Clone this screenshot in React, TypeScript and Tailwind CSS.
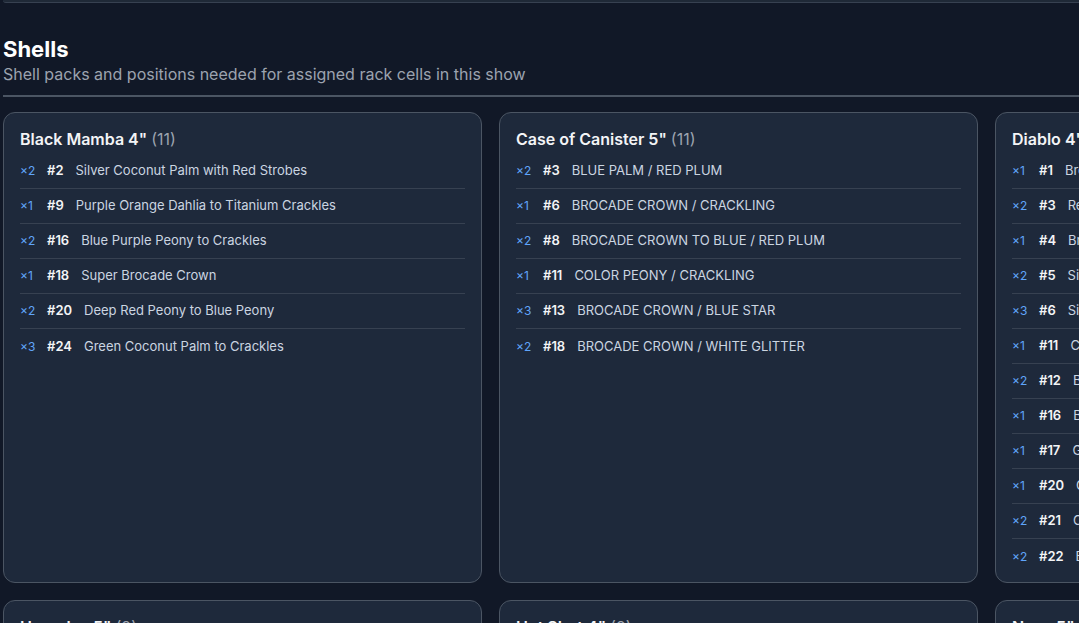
import React from "react";

type Row = [number, number, string];
const cards: { title: string; count: number; rows: Row[] }[] = [
  {
    title: 'Black Mamba 4"',
    count: 11,
    rows: [
      [2, 2, "Silver Coconut Palm with Red Strobes"],
      [1, 9, "Purple Orange Dahlia to Titanium Crackles"],
      [2, 16, "Blue Purple Peony to Crackles"],
      [1, 18, "Super Brocade Crown"],
      [2, 20, "Deep Red Peony to Blue Peony"],
      [3, 24, "Green Coconut Palm to Crackles"],
    ],
  },
  {
    title: 'Case of Canister 5"',
    count: 11,
    rows: [
      [2, 3, "BLUE PALM / RED PLUM"],
      [1, 6, "BROCADE CROWN / CRACKLING"],
      [2, 8, "BROCADE CROWN TO BLUE / RED PLUM"],
      [1, 11, "COLOR PEONY / CRACKLING"],
      [3, 13, "BROCADE CROWN / BLUE STAR"],
      [2, 18, "BROCADE CROWN / WHITE GLITTER"],
    ],
  },
  {
    title: 'Diablo 4"',
    count: 19,
    rows: [
      [1, 1, "Brocade Crown"],
      [2, 3, "Red Peony"],
      [1, 4, "Brocade Willow"],
      [2, 5, "Silver Strobe"],
      [3, 6, "Silver Crossette"],
      [1, 11, "Crackling Chrysanthemum"],
      [2, 12, "Blue Peony"],
      [1, 16, "Brocade Palm"],
      [1, 17, "Green Peony"],
      [1, 20, "Color Dahlia"],
      [2, 21, "Crackling Willow"],
      [2, 22, "Brocade Ring"],
    ],
  },
  { title: 'Hercules 5"', count: 9, rows: [] },
  { title: 'Hot Shot 4"', count: 9, rows: [] },
  { title: 'Nova 5"', count: 9, rows: [] },
];

export default function App() {
  return (
    <div
      className="h-[623px] w-[1079px] overflow-hidden bg-[#111827] text-white"
      style={{ fontFamily: "Inter, 'Noto Sans', sans-serif" }}
    >
      <div className="pl-[3px] w-[1500px]">
        <div className="h-[3px] w-full rounded-b bg-[#1f2937] border-b border-[#374151]" />
        <div className="mt-[32px] w-[1076px]">
          <h2 className="text-[22px] font-bold leading-[28px] text-white">Shells</h2>
          <p className="text-[16px] leading-[22px] text-[#9ca3af]">
            Shell packs and positions needed for assigned rack cells in this show
          </p>
          <div className="mt-[10px] h-[2px] bg-[#4b5563]" />
        </div>
        <div className="mt-[15px] grid grid-cols-[479px_479px_479px] auto-rows-[471px] gap-[17px]">
          {cards.map((c) => (
            <div
              key={c.title}
              className="rounded-xl border border-[#4b5563] bg-[#1e293b] px-[16px] pt-[15px]"
            >
              <div className="text-[16px] leading-[22px] font-semibold text-[#f3f4f6]">
                {c.title} <span className="font-normal text-[#9ca3af]">({c.count})</span>
              </div>
              <div className="mt-[4px]">
                {c.rows.map(([q, n, name], i) => (
                  <div
                    key={i}
                    className={`flex h-[35px] items-center text-[13px] ${
                      i < c.rows.length - 1 ? "border-b border-[#374151]" : ""
                    }`}
                  >
                    <span className="w-[27px] text-[12px] text-[#60a5fa]">×{q}</span>
                    <span className="mr-[12px] font-semibold text-[13px] text-[#f3f4f6]">#{n}</span>
                    <span className="text-[#cbd5e1]">{name}</span>
                  </div>
                ))}
              </div>
            </div>
          ))}
        </div>
      </div>
    </div>
  );
}
